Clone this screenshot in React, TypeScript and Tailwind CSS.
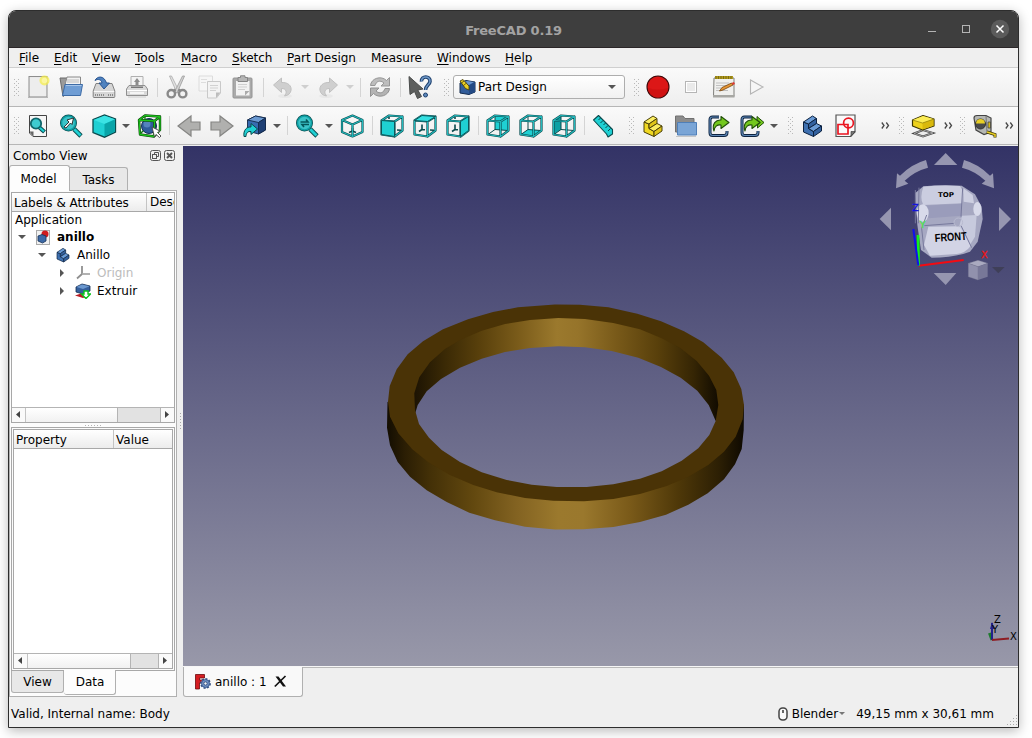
import React from 'react';

type Kids = { children?: React.ReactNode };

const OUT = '#0a4a4d';
const CY = '#1fd0d3';
const CYL = '#34e0e2';
const CYD = '#0ea0a4';

function Svg({ children }: Kids) {
  return (
    <svg viewBox="0 0 24 24" className="block h-6 w-6 shrink-0 overflow-visible">
      {children}
    </svg>
  );
}

/* A 33px wide toolbar button */
function Tool({ children }: Kids) {
  return <div className="flex w-[33px] shrink-0 items-center pl-1"><Svg>{children}</Svg></div>;
}

function Dots() {
  return (
    <svg viewBox="0 0 5 17" className="block h-[17px] w-[5px] shrink-0" shapeRendering="crispEdges">
      {[0, 4, 8, 12, 16].map((y) => (
        <g key={y} fill="#b9b9b9">
          <rect x="0" y={y} width="1" height="1" />
          <rect x="4" y={y} width="1" height="1" />
          <rect x="2" y={y - 2} width="1" height="1" />
        </g>
      ))}
    </svg>
  );
}

function Grip({ className }: { className: string }) {
  return <div className={'flex shrink-0 items-center justify-end ' + className}><Dots /></div>;
}

function Sep() {
  return <div className="flex w-[7px] shrink-0 justify-center"><div className="h-[19px] w-px bg-[#d4d4d4]" /></div>;
}

function Down({ className = 'w-3', color = '#555' }: { className?: string; color?: string }) {
  return (
    <div className={'flex shrink-0 justify-center pr-[2px] ' + className}>
      <svg viewBox="0 0 8 4" className="h-1 w-2 shrink-0"><path d="M0 0h8L4 4z" fill={color} /></svg>
    </div>
  );
}

function More({ className }: { className: string }) {
  return (
    <div className={'flex shrink-0 justify-center ' + className}>
      <svg viewBox="0 0 9 7" className="h-[7px] w-[9px]" fill="none" stroke="#484848" strokeWidth="1.3">
        <path d="M.8.5L3 3.5L.8 6.5M5.3.5L7.5 3.5L5.3 6.5" />
      </svg>
    </div>
  );
}

function Wire({ d }: { d: string }) {
  return (
    <>
      <path d={d} fill="none" stroke={OUT} strokeWidth="2.2" strokeLinejoin="round" />
      <path d={d} fill="none" stroke="#22b9bc" strokeWidth="1.1" strokeLinejoin="round" />
    </>
  );
}

const faces: Record<string, string> = {
  front: 'M1.5 6.5L14.5 7.5V22.5L1.5 20.5z',
  top: 'M1.5 6.5L9 1.5L22.5 2.5L14.5 7.5z',
  right: 'M14.5 7.5L22.5 2.5V16.5L14.5 22.5z',
  rear: 'M9 1.5L22.5 2.5V16.5L9 15.5z',
  bottom: 'M1.5 20.5L9 15.5L22.5 16.5L14.5 22.5z',
  left: 'M1.5 6.5L9 1.5V15.5L1.5 20.5z',
};

function BoxView({ face }: { face: string }) {
  const hidden = face === 'rear' || face === 'bottom' || face === 'left';
  return (
    <Tool>
      {hidden ? (
        <>
          <path d={faces[face]} fill={face === 'left' ? CYD : CY} />
          <path d="M9 2V15.5L22 16.5M9 15.5L2 20.5" fill="none" stroke={OUT} strokeWidth="1" />
          <Wire d={faces.front + faces.top + faces.right} />
        </>
      ) : (
        <>
          <path d="M9 3V5M9 10.500V15.500L6 17.500M9 15.500L12 15.700M17 16L21 16.300" stroke={OUT} strokeWidth="1.600" fill="none" />
          <Wire d={faces.front + faces.top + faces.right} />
          <path d={faces[face]} fill={face === 'top' ? CYL : CY} stroke={OUT} strokeWidth=".9" strokeLinejoin="round" />
        </>
      )}
    </Tool>
  );
}

function BlueCube({ x = 0, y = 0, s = 1 }: { x?: number; y?: number; s?: number }) {
  return (
    <g transform={`translate(${x} ${y}) scale(${s})`} stroke="#14294a" strokeWidth=".9" strokeLinejoin="round">
      <path d="M1 5L9 1L19 3V15L12 19L1 16z" fill="#376bb0" />
      <path d="M1 5L9 1L19 3L12 7.5z" fill="#6b9ad2" />
      <path d="M12 7.5L19 3V15L12 19z" fill="#1e3f74" />
    </g>
  );
}

function Steps({ a, b, c, o }: { a: string; b: string; c: string; o: string }) {
  return (
    <g stroke={o} strokeWidth="1" strokeLinejoin="round">
      <path d="M3 8L8 10V14.500L13 17.500V22.500L3 18z" fill={b} />
      <path d="M3 8L12 2L16 4.500L8 10z" fill={a} />
      <path d="M8 10L16 4.500V9.500L8 14.500z" fill={c} />
      <path d="M8 14.500L16 9.500L21 12L13 17.500z" fill={a} />
      <path d="M13 17.500L21 12V17L13 22.500z" fill={c} />
    </g>
  );
}

function BlueSteps() {
  return <Steps a="#6a9bd6" b="#3e70b0" c="#33619f" o="#0b2140" />;
}

function Magnifier() {
  return (
    <>
      <path d="M15 15L22 22" stroke={OUT} strokeWidth="4.6" />
      <path d="M15 15L21.5 21.5" stroke={CY} strokeWidth="2.8" />
      <circle cx="9.5" cy="9" r="7" fill="#9adfe3" stroke={OUT} strokeWidth="3" />
      <circle cx="9.5" cy="9" r="7" fill="#3cc3c8" stroke={CYD} strokeWidth="1.6" />
    </>
  );
}

function UndoShape() {
  return (
    <>
      <ellipse cx="14" cy="21" rx="7" ry="2" fill="#e8e8e8" />
      <path d="M2.5 10L10.5 3V7.5C17 7 21 11 20 15.5C19.5 18.5 17 20.5 13.5 21C16 18 16 13.5 10.5 13.5V17.5z" fill="#cfcfcf" stroke="#bcbcbc" strokeWidth=".9" />
    </>
  );
}

function GreenArrow() {
  return <path d="M7 17C4.500 10 9 5.500 14 6V2.500L22 8.500L14 14.500V11C10 10.500 7.500 12.500 7 17z" fill="#74c81e" stroke="#204e08" strokeWidth="1.1" strokeLinejoin="round" />;
}

function ToolbarTop() {
  return (
    <div className="flex h-[38px] shrink-0 items-center bg-gradient-to-b from-[#fafafa] to-[#eeeeee]">
      <Grip className="w-[13px] pr-[3px]" />
      <Tool>
        <rect x="3" y="1.500" width="18" height="20.500" fill="#e6e6e6" stroke="#8d8d8d" />
        <path d="M4 2.500h16v18.500H4z" fill="#ededed" />
        <path d="M2 22.500h20" stroke="#b5b5b5" />
        <circle cx="18.500" cy="5.500" r="5" fill="#f5ee4b" opacity=".75" />
        <circle cx="18.500" cy="5.500" r="2.800" fill="#fbf6a0" />
      </Tool>
      <Tool>
        <path d="M1 3H8L9 5V18L4 21.500z" fill="#9b9b9b" stroke="#6b6b6b" />
        <path d="M8 2H21.500V10H6z" fill="#f2f2f2" stroke="#888" />
        <path d="M8 5H20M8 7H20" stroke="#bbb" />
        <path d="M6 9.500H23.500L21.500 20.500H3.500z" fill="#6f9dd4" stroke="#3d6ba6" />
        <path d="M6.800 10.500H22.500" stroke="#a6c5e9" />
      </Tool>
      <Tool>
        <path d="M4 8.500H20L22.800 16V21.500Q22.800 22.500 22 22.500H2Q1.200 22.500 1.200 21.500V16z" fill="#d6d6d6" stroke="#808080" />
        <path d="M1.800 16.500H22.200" stroke="#f8f8f8" />
        <path d="M3 20H13M16 20H21" stroke="#8c8c8c" strokeWidth="2" strokeDasharray="1 1" />
        <path d="M3 5.500C5 1 12 0 14.500 8H17.500L12 14L7 8H10C9.500 4.500 6 3.500 3 5.500z" fill="#4f82bf" stroke="#2a5692" />
      </Tool>
      <Tool>
        <path d="M6 1.500H18V12H6z" fill="#f4f4f4" stroke="#b0b0b0" />
        <path d="M12 3L15 7H13.500V11H10.500V7H9z" fill="#8c8c8c" />
        <path d="M4 10.500H20L22.500 14V20.500H1.500V14z" fill="#d9d9d9" stroke="#8f8f8f" />
        <path d="M6 11.500H18V13H6z" fill="#777" />
        <path d="M2 15.500H22" stroke="#fff" /><path d="M5 18H19" stroke="#f5f5f5" strokeWidth="2" />
        <path d="M3 22H21" stroke="#ccc" />
      </Tool>
      <Sep />
      <Tool>
        <path d="M4.500 1L6.500 1L14.500 17L12 18z" fill="#e2e2e2" stroke="#aaa" strokeWidth=".8" />
        <path d="M19.500 1L17.500 1L9.500 17L12 18z" fill="#d2d2d2" stroke="#999" strokeWidth=".8" />
        <path d="M10.500 14.500L8.500 16M13.500 14.500L15.500 16" stroke="#8a8a8a" strokeWidth="2.500" />
        <circle cx="6.300" cy="18.700" r="3.700" fill="none" stroke="#898989" strokeWidth="2.400" />
        <circle cx="17.700" cy="18.700" r="3.700" fill="none" stroke="#898989" strokeWidth="2.400" />
      </Tool>
      <Tool>
        <path d="M1 1H14.500V16H1z" fill="#f6f6f6" stroke="#dcdcdc" />
        <path d="M3 4.500H9M3 7.500H8" stroke="#ddd" />
        <path d="M9.500 6.500H22.500V18L18.500 23H9.500z" fill="#f3f3f3" stroke="#c9c9c9" />
        <path d="M12 10.500H20M12 13H20M12 15.500H18" stroke="#d1d1d1" />
        <path d="M22.500 17.500H18V23z" fill="#bdbdbd" />
      </Tool>
      <Tool>
        <rect x="2" y="3" width="19" height="20" rx="1" fill="#aaa" stroke="#949494" />
        <path d="M5 6H18.500V20.500H5z" fill="#f2f2f2" />
        <path d="M7 2.500H9.500V.8H14V2.500H16.500V6.500H7z" fill="#b5b5b5" stroke="#858585" />
        <path d="M7 9.500H16M7 12H16M7 14.500H14" stroke="#cfcfcf" /><path d="M18.500 16H14V20.500z" fill="#aaa" />
      </Tool>
      <Sep />
      <Tool><UndoShape /></Tool>
      <Down className="w-[11px]" color="#cfcfcf" />
      <Tool><g transform="translate(25 0) scale(-1 1)"><UndoShape /></g></Tool>
      <Down className="w-[13px]" color="#cfcfcf" />
      <Sep />
      <Tool>
        <path d="M2.500 10.500C3 3.500 13 0 18.500 5.500L21.500 2.500V11H13L16 8C12 4.500 8 6.500 7 10.500z" fill="#bdbdbd" stroke="#979797" />
        <path d="M21.500 13.500C21 20.500 11 24 5.500 18.500L2.500 21.500V13H11L8 16C12 19.500 16 17.500 17 13.500z" fill="#b3b3b3" stroke="#929292" />
      </Tool>
      <Sep />
      <Tool>
        <path d="M1 1.500L15 14L9.800 15L13.500 21.500L9.500 23.500L6.500 16.500L2 19.500z" fill="#5d5f5e" stroke="#4a4c4b" />
        <path d="M13.500 6.500C13 .5 22.500 .5 22 6.500C21.700 10 17.500 10.500 17.500 15" fill="none" stroke="#1e416f" strokeWidth="3.600" />
        <path d="M13.500 6.500C13 .5 22.500 .5 22 6.500C21.700 10 17.500 10.500 17.500 15" fill="none" stroke="#6e98c8" strokeWidth="1.500" />
        <circle cx="17.500" cy="20" r="2" fill="#5d88bb" stroke="#1e416f" />
      </Tool>
      <Grip className="w-4 pr-[4px]" />
      <div className="flex h-6 w-[172px] shrink-0 items-center rounded-[3px] border border-[#aeaeae] bg-gradient-to-b from-white to-[#f1f1f1] pl-[5px]">
        <svg viewBox="0 0 17 17" className="h-[17px] w-[17px] shrink-0">
          <path d="M1 4L7 1.500L16 3V13L10 15.500L1 14z" fill="#315c9a" stroke="#132b4e" />
          <path d="M10 6L16 3V13L10 15.500z" fill="#244a84" /><path d="M3 4L8 2L15 3L10 6z" fill="#6a96cf" />
          <path d="M1 2L4 .5L10 7L10 11L6.500 9.500z" fill="#e9cf25" stroke="#4b410b" strokeWidth=".9" />
          <path d="M2.500 4L5 2M4.500 6.500L7.500 4" stroke="#4b410b" strokeWidth=".8" />
        </svg>
        <span className="ml-[2px] flex-1">Part Design</span>
        <Down className="w-[22px]" />
      </div>
      <Grip className="w-4 pr-[2px]" />
      <Tool>
        <circle cx="13" cy="12" r="11" fill="#dc1717" stroke="#3c0808" strokeWidth="1.100" />
        <path d="M3 13A10 10 0 0 0 23 13Q13 16 3 13z" fill="#c40d0d" opacity=".5" />
      </Tool>
      <Tool><rect x="7.500" y="6.500" width="11" height="11" fill="#f5f5f5" stroke="#b5b5b5" /><rect x="8.500" y="7.500" width="9" height="9" fill="#eaeaea" stroke="#fff" /></Tool>
      <Tool>
        <path d="M3 3H23V21.500H2.500z" fill="#f0f0ee" stroke="#80807c" />
        <path d="M2 20H23.500V22.500H2z" fill="#a7a7a3" />
        <path d="M4 1H22V4H4z" fill="#b09a1d" /><path d="M4.500 2.500H22" stroke="#7a6b10" strokeWidth="3" strokeDasharray="1 1.500" />
        <path d="M5 8H18M5 10.500H19M5 13H13M5 15.500H17" stroke="#c0c0c0" />
        <path d="M8.500 16L11 12.500L20.500 8L22 10L12 15z" fill="#e59635" stroke="#77440d" strokeWidth=".8" />
        <path d="M20.500 8L23 7L24 9L22 10z" fill="#dc3b33" />
      </Tool>
      <Tool><path d="M6.500 5V19L19 12z" fill="#f6f6f6" stroke="#b5b5b5" strokeWidth="1.100" /></Tool>
    </div>
  );
}

function ToolbarView() {
  return (
    <div className="flex h-[37px] shrink-0 items-center bg-gradient-to-b from-[#fafafa] to-[#eeeeee]">
      <Grip className="w-[13px] pr-[3px]" />
      <Tool>
        <path d="M3.500 1.500H20.500V22.500H7L3.500 19z" fill="#f6f6f6" stroke="#444" />
        <path d="M3.500 17.500H7.500V23z" fill="#666" />
        <path d="M13 13L18.500 18" stroke={OUT} strokeWidth="4.200" /><path d="M13 13L18 17.500" stroke={CY} strokeWidth="2.200" />
        <circle cx="10" cy="9.500" r="5.200" fill="#3ecbd0" stroke="#10666b" strokeWidth="1.800" />
      </Tool>
      <Tool>
        <Magnifier />
        <path d="M5 13L10 8L8 6L14.500 4L13 10.500L11.500 9L7 14z" fill="#fff" stroke="#222" strokeWidth=".9" />
      </Tool>
      <Tool>
        <path d="M1 5.500L12.500 1L23.500 5V18L12.500 23.200L1 18.500z" fill={CY} stroke={OUT} strokeWidth="1.300" />
        <path d="M1.800 6L12.500 1.700L22.800 5.300L12.500 10z" fill="#3be3e4" />
        <path d="M12.500 10L22.800 5.500V17.700L12.500 22.500z" fill="#09a4a8" />
      </Tool>
      <Down />
      <Tool>
        <path d="M8 2V15L22 17M8 15L3 20" stroke="#117a11" strokeWidth="1.400" fill="none" />
        <circle cx="12" cy="12" r="7.500" fill="#2f5c9c" stroke="#15305a" />
        <circle cx="10" cy="10" r="3.500" fill="#6f9dd6" opacity=".6" />
        <path d="M2 6L8 1.500L23 2.500L17.500 7z M2 6L3 20.500L17 22.500L17.500 7 M23 2.500V16L17 22.500" fill="none" stroke="#0b3b0b" strokeWidth="2.400" strokeLinejoin="round" />
        <path d="M2 6L8 1.500L23 2.500L17.500 7z M2 6L3 20.500L17 22.500L17.500 7 M23 2.500V16L17 22.500" fill="none" stroke="#1dc41d" strokeWidth="1.300" strokeLinejoin="round" />
        <path d="M15 13L23 17L20.500 18.500L24 22L22.500 23.500L19 20.500L17.500 23z" fill="#fff" stroke="#444" strokeWidth=".9" />
      </Tool>
      <Sep />
      <Tool><path d="M1 12L14 2V8H23V16H14V22z" fill="#b0b0ae" stroke="#858583" strokeWidth="1.200" /></Tool>
      <Tool><path d="M23 12L10 2V8H1V16H10V22z" fill="#b0b0ae" stroke="#858583" strokeWidth="1.200" /></Tool>
      <Tool>
        <BlueCube x={3.500} y={1} s={1} />
        <path d="M1 22.500C0 16 4 12.500 8 13V9.500L14.500 15L8 20.500V17.500C5 17 3 19 3 22.500z" fill={CY} stroke={OUT} />
      </Tool>
      <Down />
      <Sep />
      <Tool>
        <Magnifier />
        <path d="M5.500 8H13L11 5.500M14 10.500H7L9 13" stroke="#04585b" strokeWidth="1.600" fill="none" />
      </Tool>
      <Down className="w-3" />
      <Tool>
        <path d="M12.500 14V17L9 18.500M12.500 17L16 18.500" stroke={OUT} strokeWidth="1.600" fill="none" />
        <Wire d="M2 6L12.500 1.500L22.500 6V18L12.500 22.500L2 18zM2 6L12.500 10.500L22.500 6M12.500 10.500V22" />
      </Tool>
      <Sep />
      <BoxView face="front" />
      <BoxView face="top" />
      <BoxView face="right" />
      <Sep />
      <BoxView face="rear" />
      <BoxView face="bottom" />
      <BoxView face="left" />
      <Sep />
      <Tool>
        <path d="M1.500 6L6.500 1.500L20.500 15.500V20L16 23L14.500 20z" fill={CY} stroke={OUT} strokeWidth="1.100" strokeLinejoin="round" />
        <path d="M8.500 4L6.500 6M11 6.500L8.500 9M13.500 9L11.500 11M16 11.500L13.500 14M18.500 14.500L16 17" stroke={OUT} />
      </Tool>
      <Grip className="w-4 pr-[3px]" />
      <Tool><Steps a="#fbee62" b="#f0d823" c="#e0c518" o="#4a4008" /></Tool>
      <Tool>
        <path d="M1.500 2H9L11 4.500H20V18H1.500z" fill="#8c8c8c" stroke="#707070" />
        <path d="M3.500 8.500H22.500V21H3.500z" fill="#7aa5d6" stroke="#4f7fb8" />
        <path d="M2 22.500H22" stroke="#bbb" strokeWidth=".8" />
      </Tool>
      <Tool>
        <path d="M12 3H5.500Q3 3 3 6V18.500Q3 21.500 5.500 21.500H17Q20 21.500 20 18.500V17" fill="none" stroke="#0d2340" strokeWidth="3" />
        <path d="M12 3H5.500Q3 3 3 6V18.500Q3 21.500 5.500 21.500H17Q20 21.500 20 18.500V17" fill="none" stroke="#5e87b5" strokeWidth="1.200" />
        <GreenArrow />
      </Tool>
      <Tool>
        <path d="M12 3H4.500Q2 3 2 6V18.500Q2 21.500 4.500 21.500H15Q18 21.500 18 18.500V17" fill="none" stroke="#0d2340" strokeWidth="3" />
        <path d="M12 3H4.500Q2 3 2 6V18.500Q2 21.500 4.500 21.500H15Q18 21.500 18 18.500V17" fill="none" stroke="#5e87b5" strokeWidth="1.200" />
        <path d="M17 2.500L24 8.500L17.500 14L17.500 11L20 8.500L17 6z" fill="#74c81e" stroke="#204e08" />
        <g transform="translate(-2 0)"><GreenArrow /></g>
      </Tool>
      <Down className="w-[11px]" />
      <Grip className="w-4 pr-[3px]" />
      <Tool><g transform="translate(.5 0)"><BlueSteps /></g></Tool>
      <Tool>
        <path d="M3 1H22V18L17.500 22.500H3z" fill="#fafafa" stroke="#555" strokeWidth="1.200" />
        <path d="M22 17.500H18V22.500z" fill="#777" stroke="#333" strokeWidth=".6" />
        <circle cx="15.500" cy="9" r="4.900" fill="none" stroke="#ea1520" strokeWidth="1.700" />
        <path d="M5 10.500H15V20H5z" fill="none" stroke="#ea1520" strokeWidth="1.700" />
      </Tool>
      <More className="ml-4 w-[15px]" />
      <Grip className="w-[14px] pr-[3px]" />
      <Tool>
        <path d="M3 19.500L12 16L22 19L12 22.500z" fill="#ececec" stroke="#444" strokeWidth="2" /><path d="M3 19.500L12 16L22 19L12 22.500z" fill="none" stroke="#aaa" strokeWidth=".9" />
        <path d="M1.500 6L12 1.500L23 5V12L11.500 16L1.500 12z" fill="#eed21d" stroke="#3e3604" strokeWidth="1.200" strokeLinejoin="round" />
        <path d="M1.800 6L12 2L22.600 5L11.500 9z" fill="#fbec55" /><path d="M11.500 9L22.500 5.200V11.700L11.500 15.500z" fill="#d9b90d" />
        <path d="M1.500 6L11.500 9L23 5" stroke="#8d7b0c" fill="none" strokeWidth=".7" />
      </Tool>
      <More className="w-4" />
      <Grip className="w-[13px] pr-[4px]" />
      <Tool>
        <path d="M1 4Q1 1.500 4 1.500H13L18 4V18L11 20.500L3 16z" fill="#b5b7b3" stroke="#444" strokeWidth="1.200" />
        <path d="M13 2L14 19" stroke="#777" />
        <circle cx="7.500" cy="10" r="5" fill="#4a4a4a" stroke="#333" /><path d="M3 9.500A4.500 4.500 0 0 1 12 9.500z" fill="#e9cf25" />
        <path d="M15 8H17.500V14H15z" fill="#d4b91c" stroke="#444" strokeWidth=".8" />
        <path d="M14 18L22 20.500V23.500" fill="none" stroke="#3e3604" strokeWidth="3" /><path d="M14 18L22 20.500V23" fill="none" stroke="#e9cf25" strokeWidth="1.600" />
      </Tool>
      <More className="w-[15px]" />
    </div>
  );
}

const menus = [
  ['F', 'ile', 'w-[35px]'],
  ['E', 'dit', 'w-[38px]'],
  ['V', 'iew', 'w-[43px]'],
  ['T', 'ools', 'w-[46px]'],
  ['M', 'acro', 'w-[51px]'],
  ['S', 'ketch', 'w-[55px]'],
  ['P', 'art Design', 'w-[84px]'],
  ['', 'Measure', 'w-[66px]'],
  ['W', 'indows', 'w-[68px]'],
  ['H', 'elp', 'w-[40px]'],
];

function ScrollBar({ thumb }: { thumb: string }) {
  return (
    <div className="flex h-[15px] shrink-0 border-t border-[#b4b4b4] bg-[#e2e2e2]">
      <div className="flex w-[14px] items-center justify-center border-r border-[#c4c4c4] bg-[#fafafa] pb-px pr-px">
        <svg viewBox="0 0 4 7" className="h-[7px] w-1"><path d="M4 0V7L0 3.500z" fill="#444" /></svg>
      </div>
      <div className={'border-r border-[#b4b4b4] bg-gradient-to-b from-white to-[#f1f1f1] ' + thumb} />
      <div className="flex-1" />
      <div className="flex w-[14px] items-center justify-center border-l border-[#b4b4b4] bg-[#fafafa] pb-px pr-[2px]">
        <svg viewBox="0 0 4 7" className="h-[7px] w-1"><path d="M0 0V7L4 3.500z" fill="#444" /></svg>
      </div>
    </div>
  );
}

function Closed() {
  return <svg viewBox="0 0 4 8" className="mr-[11px] h-2 w-1 shrink-0"><path d="M0 0L4 4L0 8z" fill="#555" /></svg>;
}

function Opened({ className }: { className: string }) {
  return <svg viewBox="0 0 8 4" className={'h-1 w-2 shrink-0 ' + className}><path d="M0 0H8L4 4z" fill="#555" /></svg>;
}

function ComboView() {
  return (
    <div className="flex w-[168px] shrink-0 flex-col">
      <div className="flex h-[21px] items-center pl-1">
        <span className="flex-1">Combo View</span>
        <svg viewBox="0 0 26 11" className="mr-px h-[11px] w-[26px]" fill="none" stroke="#555">
          <rect x=".5" y=".5" width="10" height="10" rx="2" />
          <rect x="2.500" y="4.500" width="4" height="4" /><path d="M4.500 4V2.500H8.500V6.500H7" />
          <rect x="14.500" y=".5" width="10" height="10" rx="2" />
          <path d="M17 3L22 8M22 3L17 8" strokeWidth="1.900" />
        </svg>
      </div>
      <div className="flex h-[24px] items-end">
        <div className="z-10 mb-[-1px] flex h-[26px] w-[61px] items-center justify-center rounded-t-[3px] border border-b-0 border-[#b0b0b0] bg-[#fdfdfd] pr-[2px]">Model</div>
        <div className="flex h-[23px] w-[58px] items-center justify-center rounded-tr-[3px] border border-b-0 border-l-0 border-[#b0b0b0] bg-[#e8e8e8] pt-px">Tasks</div>
      </div>
      <div className="flex h-[507px] flex-col border border-[#b0b0b0] bg-[#fcfcfc] p-px">
        <div className="flex h-[231px] w-[164px] shrink-0 flex-col border border-[#a8a8a8] bg-white">
          <div className="flex h-[19px] shrink-0 items-center overflow-hidden border-b border-[#a8a8a8] bg-gradient-to-b from-white to-[#ececec] whitespace-nowrap">
            <span className="h-full w-[135px] shrink-0 border-r border-[#c4c4c4] pl-[2px] leading-[20px]">Labels &amp; Attributes</span>
            <span className="pl-[3px] leading-[20px]">Description</span>
          </div>
          <div className="flex-1">
            <div className="flex h-4 items-center pl-[3px]">Application</div>
            <div className="flex h-[18px] items-center font-bold">
              <Opened className="ml-[6px] mr-[10px]" />
              <svg viewBox="0 0 14 15" className="mr-[7px] h-[15px] w-[14px] shrink-0">
                <rect x=".5" y=".5" width="13" height="14" fill="#f1f1f1" stroke="#aaa" />
                <circle cx="9" cy="4" r="3.500" fill="#d01c1f" />
                <path d="M2 6L6 4.500L10 6V11L6.500 13L2 11z" fill="#3c69a6" stroke="#173156" strokeWidth=".8" />
              </svg>
              anillo
            </div>
            <div className="flex h-[18px] items-center">
              <Opened className="ml-[26px] mr-[9px]" />
              <svg viewBox="0 0 24 24" className="mr-[6px] h-4 w-4 shrink-0"><BlueSteps /></svg>
              Anillo
            </div>
            <div className="flex h-[18px] items-center pl-[48px] text-[#bcbcbc]">
              <Closed />
              <svg viewBox="0 0 16 16" className="mr-[6px] h-4 w-4 shrink-0" fill="none" stroke="#8f8f8f" strokeWidth="1.800">
                <path d="M7 1V9L2 13.500" /><path d="M7 9H15" stroke="#aaa" />
              </svg>
              Origin
            </div>
            <div className="flex h-[18px] items-center pl-[48px]">
              <Closed />
              <svg viewBox="0 0 16 16" className="mr-[6px] h-4 w-4 shrink-0">
                <path d="M0 12.500L6 10.500L14 13L8 15z" fill="#b81d24" />
                <path d="M1 4L7 1L15 3V8L8 11L1 9z" fill="#355f9c" stroke="#152f54" strokeWidth=".8" />
                <path d="M1.500 4L7 1.500L14.500 3.200L8 6z" fill="#6b98cf" />
                <path d="M9 8H13V11H15.500L11 15.500L6.500 11H9z" fill="#fff" stroke="#09c41b" strokeWidth="1.400" />
              </svg>
              Extruir
            </div>
          </div>
          <ScrollBar thumb="w-[92px]" />
        </div>
        <div className="flex h-1 shrink-0 items-center justify-center">
          <svg viewBox="0 0 16 3" className="h-[3px] w-4" fill="#b4b4b4" shapeRendering="crispEdges">
            <path d="M0 1h1v1H0zM3 1h1v1H3zM6 1h1v1H6zM9 1h1v1H9zM12 1h1v1h-1zM15 1h1v1h-1z" />
          </svg>
        </div>
        <div className="flex h-[244px] w-[164px] shrink-0 flex-col border border-[#a8a8a8] p-px">
          <div className="flex flex-1 flex-col border border-[#a8a8a8] bg-white">
            <div className="flex h-[19px] shrink-0 border-b border-[#a8a8a8] bg-gradient-to-b from-white to-[#ececec] leading-[20px]">
              <span className="w-[100px] border-r border-[#c4c4c4] pl-[2px]">Property</span>
              <span className="pl-[2px]">Value</span>
            </div>
            <div className="flex-1" />
            <ScrollBar thumb="w-[103px]" />
          </div>
        </div>
        <div className="flex h-6 items-start">
          <div className="flex h-[22px] w-[53px] items-center justify-center rounded-b-[3px] border border-t-0 border-[#b0b0b0] bg-[#e8e8e8]">View</div>
          <div className="mt-[-1px] flex h-[25px] w-[52px] items-center justify-center rounded-b-[3px] border border-l-0 border-t-0 border-[#b0b0b0] bg-[#fdfdfd] pl-px">Data</div>
        </div>
      </div>
    </div>
  );
}

function Scene() {
  return (
    <svg viewBox="183 146 835 520" className="block h-[520px] w-[835px]">
      <defs>
        <linearGradient id="bg" x1="0" y1="0" x2="0" y2="1">
          <stop offset="0" stopColor="#333366" /><stop offset="1" stopColor="#9898a9" />
        </linearGradient>
        <linearGradient id="inner" gradientUnits="userSpaceOnUse" x1="414" y1="0" x2="718" y2="0">
          <stop offset="0" stopColor="#1c1303" /><stop offset=".1" stopColor="#3a2905" /><stop offset=".22" stopColor="#5a410c" />
          <stop offset=".35" stopColor="#7c5d1b" /><stop offset=".47" stopColor="#9b792d" /><stop offset=".54" stopColor="#96742a" />
          <stop offset=".66" stopColor="#7a5b1a" /><stop offset=".8" stopColor="#59400b" /><stop offset=".92" stopColor="#352504" />
          <stop offset="1" stopColor="#120c01" />
        </linearGradient>
        <linearGradient id="outer" gradientUnits="userSpaceOnUse" x1="387" y1="0" x2="744" y2="0">
          <stop offset="0" stopColor="#130d01" /><stop offset=".05" stopColor="#2b1e04" /><stop offset=".12" stopColor="#433007" />
          <stop offset=".24" stopColor="#62480f" /><stop offset=".36" stopColor="#826221" /><stop offset=".48" stopColor="#9b792d" />
          <stop offset=".55" stopColor="#9a782d" /><stop offset=".68" stopColor="#7a5a19" /><stop offset=".82" stopColor="#4d3708" />
          <stop offset=".93" stopColor="#2c1f04" /><stop offset="1" stopColor="#0e0901" />
        </linearGradient>
      </defs>
      <rect x="183" y="146" width="835" height="520" fill="url(#bg)" />
      <path fill="url(#outer)" d="M387.500 402L387 427.700L390 445.300L397.700 462L410 476.700L426.700 490.300L446.700 502L469.300 512.700L495 520.300L525 526.700L555 529.500L583.300 529.300L613.300 527L640 522L666 514.700L688.300 504.700L707.700 493.300L724 479.300L735 464.300L741.700 449L743.700 430L744 405L735 400L722 430L704 455L664 479L614 492L560 494L506 487L460 470L425 445L403 415L400 400z" />
      <path fill="url(#inner)" d="M415.300 413L417.700 405L426.700 391.300L441 379L460 367.700L481.700 358.700L505 352L530 348L558.300 346.300L585 347.300L611.700 351L638.300 357.700L661 367L680.700 377.700L697.300 390.700L708.700 405L715.700 421L725 405L720 380L700 355L665 334L640 322L585 313L530 314L490 321L452 338L430 352L410 380L408 400z" />
      <path fill="#4a3306" fillRule="evenodd" d="M555 304.500L518 307.300L493 312L468 319.300L443 329.300L423 341.300L407.700 354.300L396.700 369.300L389.700 386L388 401.700L390 416.700L398.300 433.300L412.300 449.300L428.300 462.300L450 475L473.300 485L496.700 492.300L525 498L553.300 500.700L584 501.300L613.300 499L640 494L666.700 486L688.300 476.700L708.300 465L724 451.700L735.700 436.700L742.700 419.300L744 405L741.300 389L733.700 372.300L721.700 357.700L703.300 342.300L684 331.300L661 321.300L637.300 313.700L608.300 307.300L580 304.700z
        M585 319L613.300 323L640 329.300L661.700 338.300L680 347.700L696.700 361L709 375.700L716.300 390L718.300 405L715.700 421L709.300 435L698.300 448.300L681.700 460.700L661.700 471.300L640 478.700L613.300 484.300L586.700 487L556.700 487L531.700 484.700L506.700 480L481.700 472.300L460 462L441.700 450L429 437.700L419 424L415 410L414.300 393.300L419.300 377.300L430 362.300L445 349L460 340L481.700 330.700L505 324L530 320L558.300 318z" />
      <g transform="translate(860 145) scale(.33333)">
        <g fill="#9696b0">
          <path d="M222 60L257 24L292 60z" /><path d="M221 384L257 420L289 384z" /><path d="M59 222L93 188V256z" /><path d="M417 186V258L453 222z" />
          <path d="M198 45L204 68Q165 78 134 107L145 116L108 130L111 85L120 92Q155 57 198 45z" />
          <path d="M312 45L306 68Q345 78 376 107L365 116L402 130L399 85L390 92Q355 57 312 45z" />
        </g>
        <path d="M190 124Q245 118 305 122L345 148L365 185L368 222L353 290L330 320Q285 338 215 338L183 315L172 240L165 145z" fill="#b4b6cd" opacity=".88" />
        <path d="M190 125Q245 119 300 123L310 140L306 175L190 180Q178 160 190 125z" fill="#cbcde0" />
        <path d="M188 182L306 176L304 212L206 220z" fill="#9a9cbb" />
        <path d="M310 130L338 150L342 175L311 170z" fill="#cdcfe1" />
        <path d="M306 212L350 210L345 275L326 306L298 244z" fill="#d0d2e4" opacity=".8" />
        <path d="M205 245L298 244L333 302Q315 325 290 327L210 332L192 300z" fill="#d2d4e5" />
        <ellipse cx="188" cy="204" rx="18" ry="26" fill="#d8daea" /><ellipse cx="352" cy="192" rx="12" ry="21" fill="#d8daea" />
        <g fill="none" stroke="#77799d" strokeWidth="3">
          <path d="M166 135V235M177 128L175 235M308 130L303 215M193 242L283 235M303 242L335 308M200 210L185 250L192 315" /><circle cx="295" cy="232" r="13" stroke="#b9bbd0" />
        </g>
        <text x="234" y="155" fontSize="20" textLength="48" lengthAdjust="spacingAndGlyphs" fontWeight="bold">TOP</text>
        <text x="225" y="291" fontSize="34" textLength="96" lengthAdjust="spacingAndGlyphs" fontWeight="bold" fontFamily="Liberation Sans, sans-serif" transform="rotate(-4 225 291)">FRONT</text>
        <g strokeWidth="6"><path d="M176 362L311 345" stroke="#f30b12" /><path d="M176 362L174 270" stroke="#12ef1f" strokeWidth="8" /><path d="M175 362L160 252" stroke="#1010ee" /></g>
        <g fontSize="28" strokeWidth="1">
          <text x="157" y="198" fill="#1111df" stroke="#1111df">Z</text>
          <text x="179" y="248" fill="#54e454" stroke="#54e454">Y</text>
          <text x="364" y="339" fill="#ef1515" stroke="#ef1515">X</text>
        </g>
        <path d="M325 355L354 346L383 355L354 365z" fill="#aaaac0" stroke="#777790" /><path d="M325 355L354 365V405L325 395z" fill="#9191ad" stroke="#777790" /><path d="M354 365L383 355V395L354 405z" fill="#787898" />
        <path d="M396 366H434L415 385z" fill="#3f3f58" />
      </g>
      <path d="M992 640L989.500 633" stroke="#1c7b2c" strokeWidth="3" /><path d="M992 640V623" stroke="#22228c" strokeWidth="2" />
      <path d="M990 629L992 622L994.500 629z" fill="#22228c" /><path d="M992 640L1009 638.500" stroke="#8e1d24" strokeWidth="2" />
      <g fontSize="10"><text x="994" y="623">Z</text><text x="992" y="633">Y</text><text x="1010" y="639.500">X</text></g>
    </svg>
  );
}

export default function App() {
  return (
    <div className="h-[738px] w-[1032px] overflow-hidden bg-white pl-2 pt-[10px] font-['DejaVu_Sans',sans-serif] text-[12px] leading-4 text-black">
      <div className="flex h-[718px] w-[1011px] flex-col rounded-t-[8px] border border-[#2d2d2d] bg-[#efefef] shadow-[0_3px_12px_rgba(0,0,0,0.28)]">
        <div className="grid h-[37px] shrink-0 grid-cols-[120px_1fr_120px] items-center rounded-t-[7px] border-b border-[#2b2628] bg-[#3e3e3e]">
          <div />
          <div className="pt-[3px] text-center text-[13px] font-bold tracking-[-0.2px] text-[#a3a3a3]">FreeCAD 0.19</div>
          <svg viewBox="0 0 120 36" className="h-9 w-[120px]" fill="none" stroke="#b4b4b4">
            <path d="M30 20.500H38" /><rect x="64.500" y="14.500" width="7" height="7" />
            <circle cx="102" cy="18" r="9.200" fill="#5b5b5b" stroke="none" />
            <path d="M98.500 14.500L105.500 21.500M105.500 14.500L98.500 21.500" stroke="#fff" strokeWidth="1.500" />
          </svg>
        </div>
        <div className="flex h-5 shrink-0 items-center border-b border-[#cfcfcf] pl-[10px]">
          {menus.map(([key, rest, w]) => (
            <span key={rest} className={'shrink-0 whitespace-nowrap ' + w}>
              <span className="underline underline-offset-2">{key}</span>{rest}
            </span>
          ))}
        </div>
        <ToolbarTop />
        <div className="h-px shrink-0 bg-[#b6b6b6]" />
        <ToolbarView />
        <div className="h-px shrink-0 bg-[#b6b6b6]" />
        <div className="flex h-[552px] shrink-0">
          <ComboView />
          <div className="flex w-[6px] shrink-0 items-center justify-center">
            <svg viewBox="0 0 1 16" className="h-4 w-px" fill="#a8a8a8"><path d="M0 0h1v1H0zM0 3h1v1H0zM0 6h1v1H0zM0 9h1v1H0zM0 12h1v1H0zM0 15h1v1H0z" /></svg>
          </div>
          <div className="flex w-[835px] flex-col pt-px">
            <Scene />
            <div className="h-px shrink-0 bg-[#f6f6f6]" />
            <div className="flex h-[30px] shrink-0">
              <div className="flex w-[120px] items-center rounded-b-[3px] border border-t-0 border-[#b0b0b0] bg-[#f9f9f9] pl-[11px]">
                <svg viewBox="0 0 16 16" className="mr-1 h-4 w-4 shrink-0">
                  <path d="M.5 .5H9.500V4H4.500V6H8V9H4.500V15H.5z" fill="#d51d22" stroke="#6c0a0d" strokeWidth=".8" />
                  <circle cx="10.500" cy="9.500" r="4.600" fill="#7393c4" stroke="#334f80" strokeWidth="1.600" strokeDasharray="2 1.500" />
                  <circle cx="10.500" cy="9.500" r="3.800" fill="#7495c8" stroke="#415f92" strokeWidth=".8" /><circle cx="10.500" cy="9.500" r="1.700" fill="#f5f5f5" stroke="#334f80" />
                </svg>
                <span className="pt-px">anillo : 1</span>
                <svg viewBox="0 0 13 13" className="ml-[7px] h-[13px] w-[13px]"><path d="M1.500 1.500H4.500L12 11.500H9z" fill="#111" /><path d="M.8 11.500L11.500 1" stroke="#111" strokeWidth="1.700" /></svg>
              </div>
              <div className="flex-1 border-t border-[#b9b9b9]" />
            </div>
          </div>
        </div>
        <div className="flex flex-1 items-center pb-px pl-[2px] pt-1">
          <span className="flex-1">Valid, Internal name: Body</span>
          <svg viewBox="0 0 10 14" className="mr-1 h-[14px] w-[10px]"><rect x="1" y="1" width="8" height="12" rx="3.500" fill="#fafafa" stroke="#444" strokeWidth="1.500" /><path d="M5 3V6" stroke="#444" strokeWidth="1.600" /></svg>
          <span>Blender</span>
          <svg viewBox="0 0 6 3" className="ml-px h-[3px] w-[6px]"><path d="M0 0H6L3 3z" fill="#777" /></svg>
          <span className="ml-[11px]">49,15 mm x 30,61 mm</span>
          <svg viewBox="0 0 12 12" className="ml-3 mt-3 h-3 w-3" fill="#aaa" shapeRendering="crispEdges">
            <path d="M10 1h1v1h-1zM7 4h1v1H7zM10 4h1v1h-1zM4 7h1v1H4zM7 7h1v1H7zM10 7h1v1h-1zM1 10h1v1H1zM4 10h1v1H4zM7 10h1v1H7zM10 10h1v1h-1z" />
          </svg>
        </div>
      </div>
    </div>
  );
}
